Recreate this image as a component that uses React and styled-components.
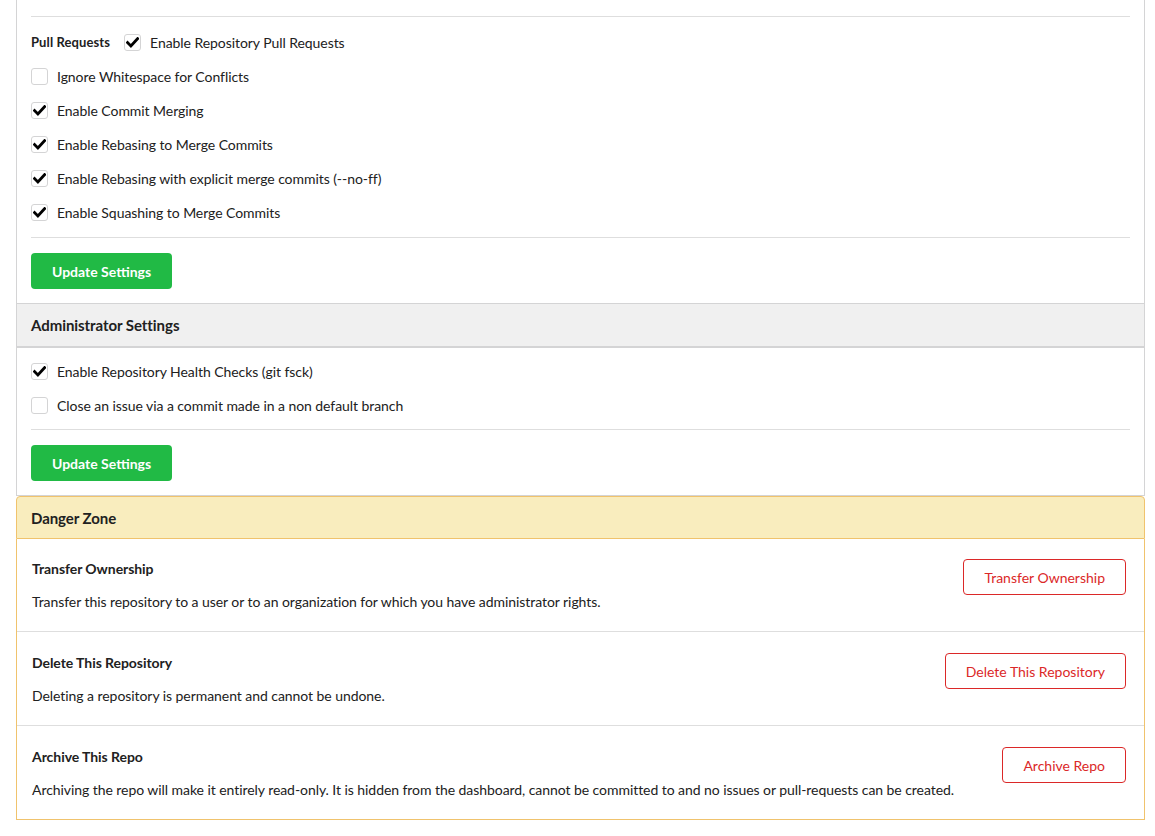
import React from 'react';
import styled, { createGlobalStyle } from 'styled-components';

const GlobalStyle = createGlobalStyle`
  html, body {
    margin: 0;
    padding: 0;
    background: #fff;
  }
  body {
    font-family: Lato, "Open Sans", "Liberation Sans", sans-serif;
    font-size: 14px;
    letter-spacing: -0.06px;
    color: #212121;
  }
  * {
    box-sizing: border-box;
  }
`;

const Page = styled.div`
  width: 1129px;
  margin-left: 16px;
`;

const Segment = styled.div`
  border: 1px solid #d4d4d5;
  border-top: ${props => (props.$cut ? 'none' : '1px solid #d4d4d5')};
  padding: ${props => (props.$cut ? '16px' : '15px')} 14px 14px;
  background: #fff;
`;

const Divider = styled.div`
  height: 1px;
  background: #dedede;
  margin: ${props => props.$m || '15px 0'};
`;

const Fields = styled.div`
  display: flex;
  flex-direction: column;
  gap: 17px;
`;

const Field = styled.label`
  display: flex;
  align-items: center;
  height: 17px;
  line-height: 17px;
`;

const InlineLabel = styled.span`
  font-weight: 700;
  font-size: 13px;
  letter-spacing: 0.1px;
  margin-right: 14px;
`;

const Box = styled.span`
  width: 17px;
  height: 17px;
  border: 1px solid #d4d4d5;
  border-radius: 3px;
  display: inline-flex;
  align-items: center;
  justify-content: center;
  margin-right: 9px;
  flex-shrink: 0;
  background: #fff;
`;

const Check = ({ checked }) => (
  <Box>
    {checked && (
      <svg width="13" height="11" viewBox="0 0 13 11">
        <path d="M1.5 5.6 L4.9 8.9 L11.6 1.6" fill="none" stroke="#000" strokeWidth="2.8" strokeLinecap="square" />
      </svg>
    )}
  </Box>
);

const GreenButton = styled.button`
  font-family: inherit;
  font-size: 14px;
  font-weight: 700;
  color: #fff;
  background: #21ba45;
  border: none;
  border-radius: 4px;
  height: 36px;
  padding: 0 21px;
  cursor: pointer;
`;

const Header = styled.div`
  border: 1px solid ${props => (props.$warn ? '#f0c36d' : '#d4d4d5')};
  border-top: ${props => (props.$warn ? '1px solid #f0c36d' : 'none')};
  background: ${props => (props.$warn ? '#f9edbe' : '#f0f0f0')};
  border-radius: ${props => (props.$warn ? '4px 4px 0 0' : '0')};
  padding: 0 14px;
  height: 43px;
  display: flex;
  align-items: center;
  font-size: 15px;
  font-weight: 700;
  color: #212121;
`;

const DangerBody = styled.div`
  border: 1px solid #f0c36d;
  border-top: none;
`;

const DangerItem = styled.div`
  display: flex;
  justify-content: space-between;
  align-items: flex-start;
  padding: ${props => (props.$first ? '21px' : '22px')} 18px 20px 15px;
  border-top: ${props => (props.$first ? 'none' : '1px solid #dedede')};
`;

const ItemTitle = styled.div`
  font-weight: 700;
  font-size: 14px;
  line-height: 18px;
  margin-bottom: 15px;
`;

const ItemText = styled.div`
  font-size: 14px;
  line-height: 18px;
`;

const RedButton = styled.button`
  font-family: inherit;
  font-size: 14px;
  color: #db2828;
  background: #fff;
  border: 1px solid #db2828;
  border-radius: 4px;
  height: 36px;
  padding: 0 20px;
  margin-top: -1px;
  flex-shrink: 0;
  cursor: pointer;
`;

const pullOptions = [
  ['Ignore Whitespace for Conflicts', false],
  ['Enable Commit Merging', true],
  ['Enable Rebasing to Merge Commits', true],
  ['Enable Rebasing with explicit merge commits (--no-ff)', true],
  ['Enable Squashing to Merge Commits', true],
];

const dangerItems = [
  ['Transfer Ownership', 'Transfer this repository to a user or to an organization for which you have administrator rights.', 'Transfer Ownership'],
  ['Delete This Repository', 'Deleting a repository is permanent and cannot be undone.', 'Delete This Repository'],
  ['Archive This Repo', 'Archiving the repo will make it entirely read-only. It is hidden from the dashboard, cannot be committed to and no issues or pull-requests can be created.', 'Archive Repo'],
];

export default function App() {
  return (
    <Page>
      <GlobalStyle />
      <Segment $cut>
        <Divider $m="0 0 17px" />
        <Fields>
          <Field>
            <InlineLabel>Pull Requests</InlineLabel>
            <Check checked />
            Enable Repository Pull Requests
          </Field>
          {pullOptions.map(([label, checked]) => (
            <Field key={label}>
              <Check checked={checked} />
              {label}
            </Field>
          ))}
        </Fields>
        <Divider $m="16px 0 15px" />
        <GreenButton>Update Settings</GreenButton>
      </Segment>
      <Header>Administrator Settings</Header>
      <Segment>
        <Fields>
          <Field>
            <Check checked />
            Enable Repository Health Checks (git fsck)
          </Field>
          <Field>
            <Check />
            Close an issue via a commit made in a non default branch
          </Field>
        </Fields>
        <Divider />
        <GreenButton>Update Settings</GreenButton>
      </Segment>
      <Header $warn>Danger Zone</Header>
      <DangerBody>
        {dangerItems.map(([title, text, action], i) => (
          <DangerItem key={title} $first={i === 0}>
            <div>
              <ItemTitle>{title}</ItemTitle>
              <ItemText>{text}</ItemText>
            </div>
            <RedButton>{action}</RedButton>
          </DangerItem>
        ))}
      </DangerBody>
    </Page>
  );
}
